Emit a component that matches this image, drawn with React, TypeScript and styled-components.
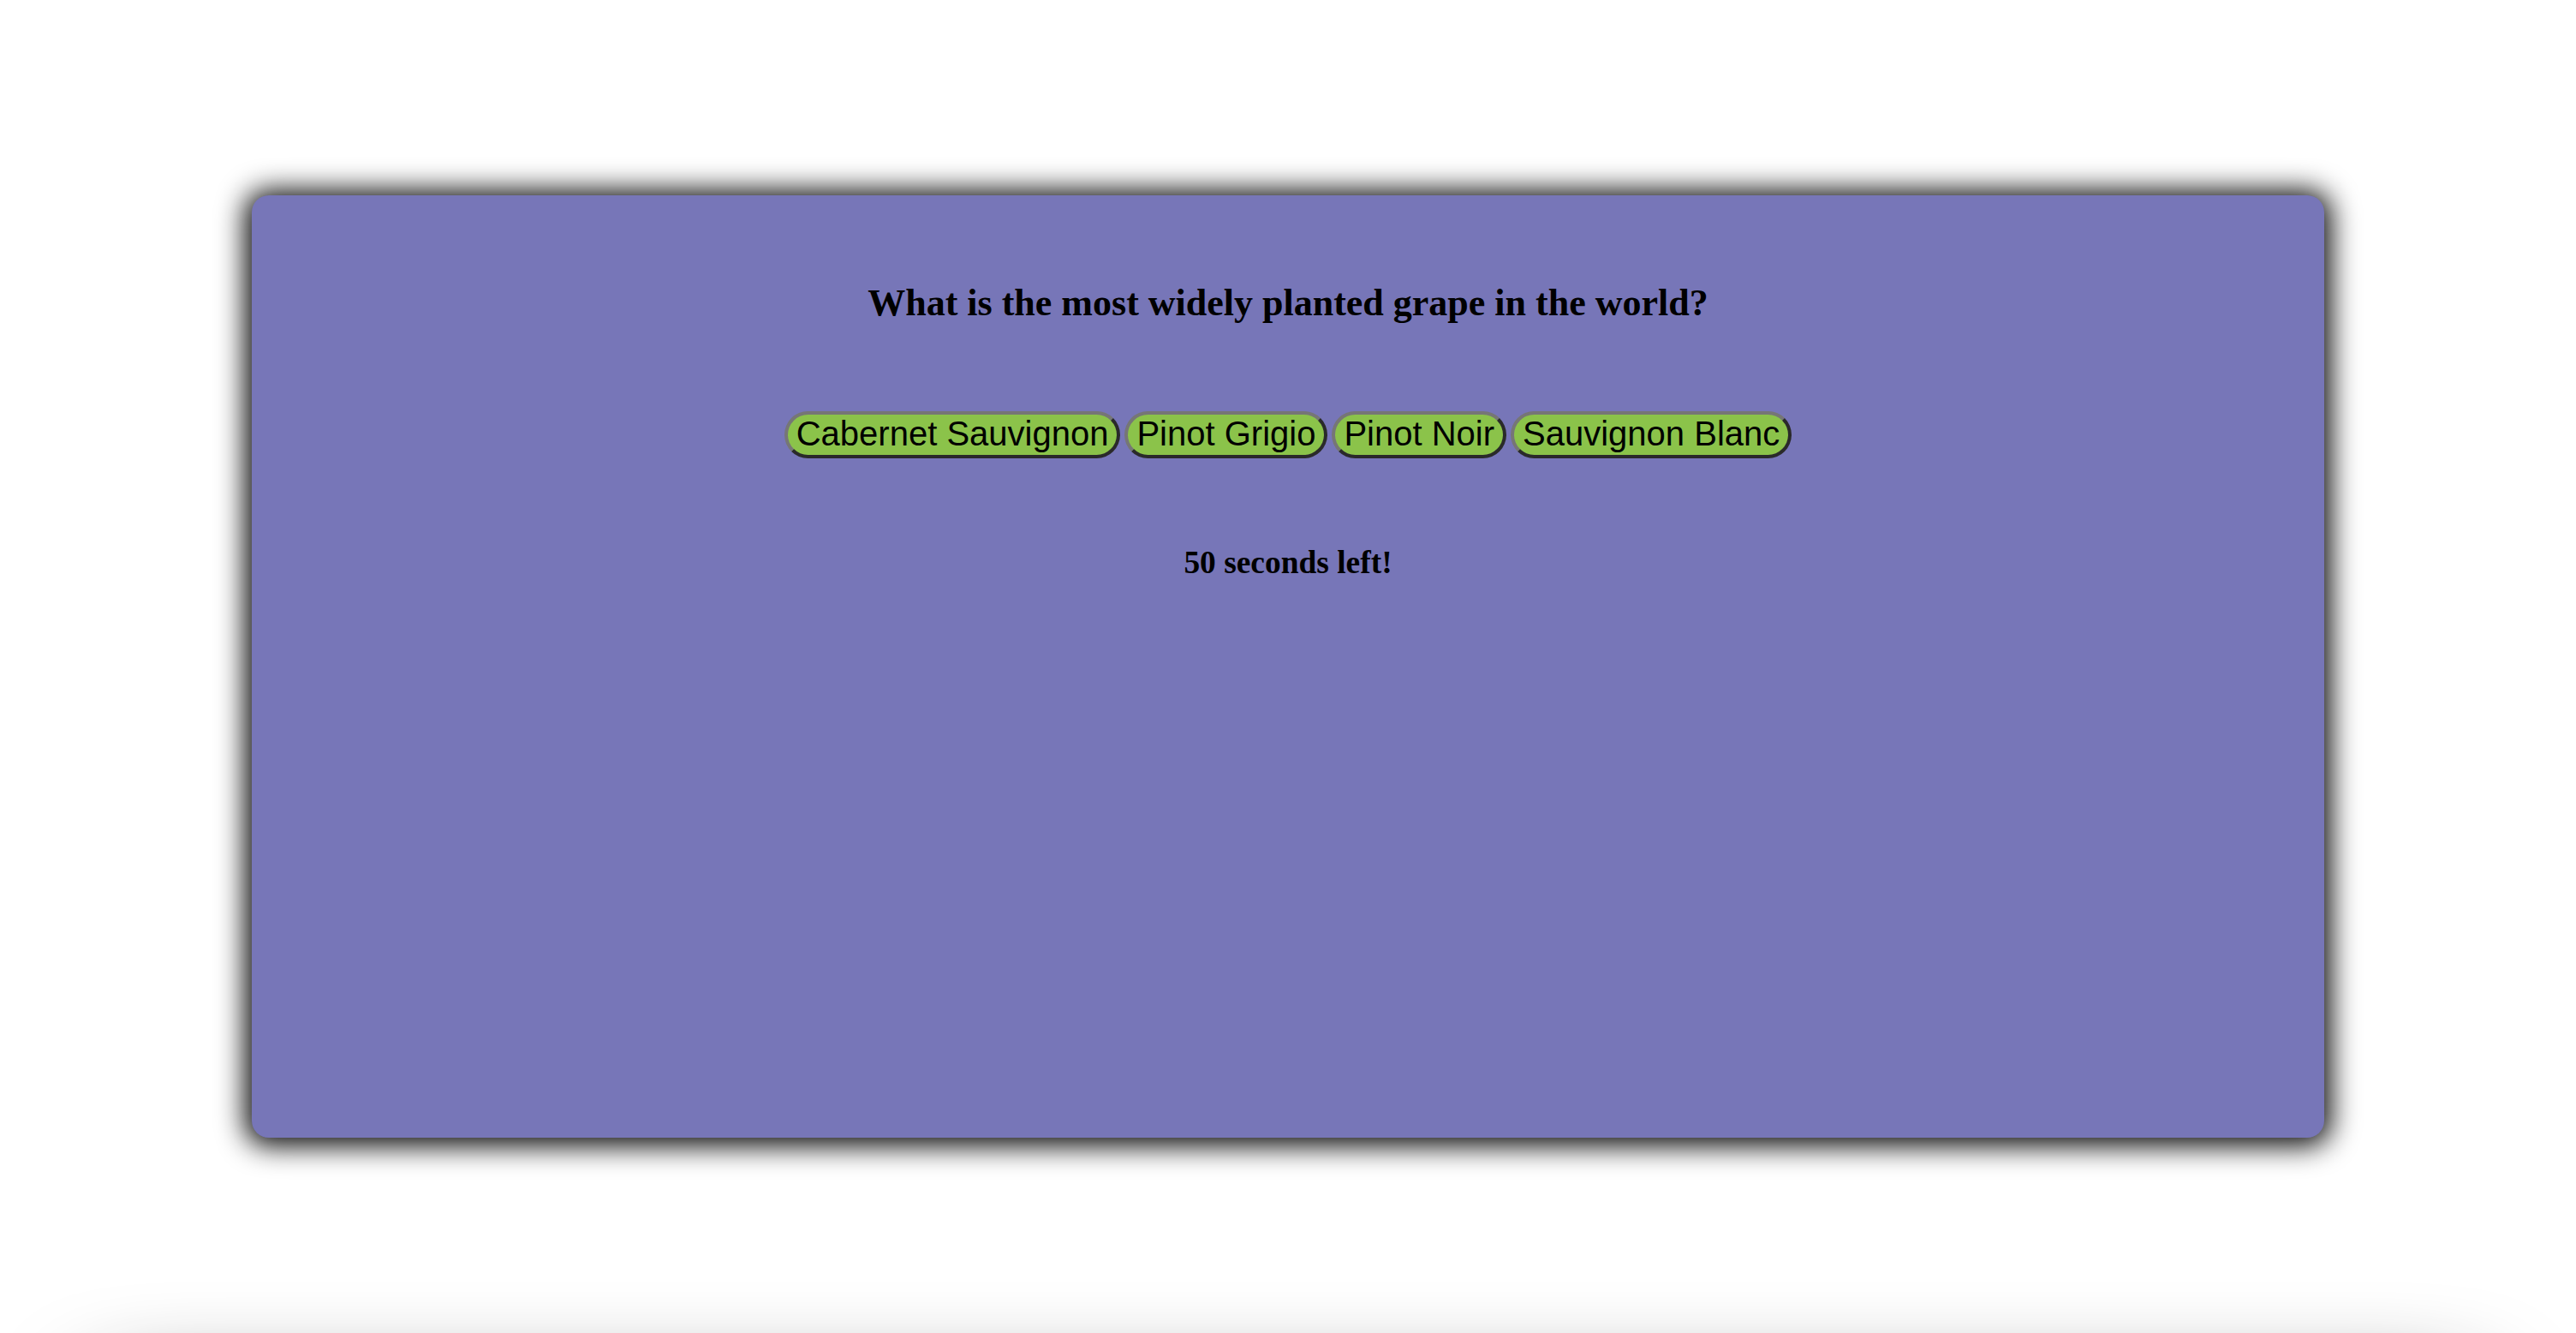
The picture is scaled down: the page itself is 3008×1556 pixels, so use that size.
import React from "react";
import styled, { createGlobalStyle } from "styled-components";

const GlobalStyle = createGlobalStyle`
  html, body {
    margin: 0;
    padding: 0;
    background: #ffffff;
  }
  body {
    font-family: "Liberation Serif", "Times New Roman", serif;
  }
`;

const Page = styled.div`
  padding-top: 228px;
  display: flex;
  flex-direction: column;
  align-items: center;
`;

const Card = styled.section`
  box-sizing: border-box;
  width: 2420px;
  height: 1100px;
  background: #7776b8;
  border-radius: 20px;
  box-shadow: 0 2px 32px 8px rgba(0, 0, 0, 0.95);
  display: flex;
  flex-direction: column;
  align-items: center;
  padding-top: 101px;
`;

const Question = styled.h2`
  margin: 0 0 102px;
  font-family: "Liberation Serif", "Times New Roman", serif;
  font-weight: bold;
  font-size: 44px;
  line-height: 49px;
  color: #000;
  text-align: center;
`;

const Answers = styled.div`
  display: flex;
  flex-direction: row;
  gap: 5px;
  justify-content: center;
`;

const AnswerButton = styled.button`
  box-sizing: border-box;
  height: 55px;
  padding: 0 10px 2px;
  font-family: "Liberation Sans", Arial, sans-serif;
  font-size: 40px;
  line-height: 45px;
  color: #000;
  background: #8bc34a;
  border-style: solid;
  border-width: 4px;
  border-color: #767676 #2a2a2a #2a2a2a #767676;
  border-radius: 999px;
  cursor: pointer;
  white-space: nowrap;
`;

const Timer = styled.h3`
  margin: 101px 0 0;
  font-family: "Liberation Serif", "Times New Roman", serif;
  font-weight: bold;
  font-size: 37.44px;
  line-height: 42px;
  color: #000;
  text-align: center;
`;

const Results = styled.div`
  align-self: stretch;
  margin: 312px 120px 0;
  height: 400px;
  background: #ffffff;
  border-radius: 20px;
  box-shadow: 0 0 120px rgba(0, 0, 0, 0.9);
`;

const answers = ["Cabernet Sauvignon", "Pinot Grigio", "Pinot Noir", "Sauvignon Blanc"];

export default function App() {
  return (
    <>
      <GlobalStyle />
      <Page>
        <Card>
          <Question>What is the most widely planted grape in the world?</Question>
          <Answers>
            {answers.map((a) => (
              <AnswerButton key={a}>{a}</AnswerButton>
            ))}
          </Answers>
          <Timer>50 seconds left!</Timer>
        </Card>
        <Results />
      </Page>
    </>
  );
}
